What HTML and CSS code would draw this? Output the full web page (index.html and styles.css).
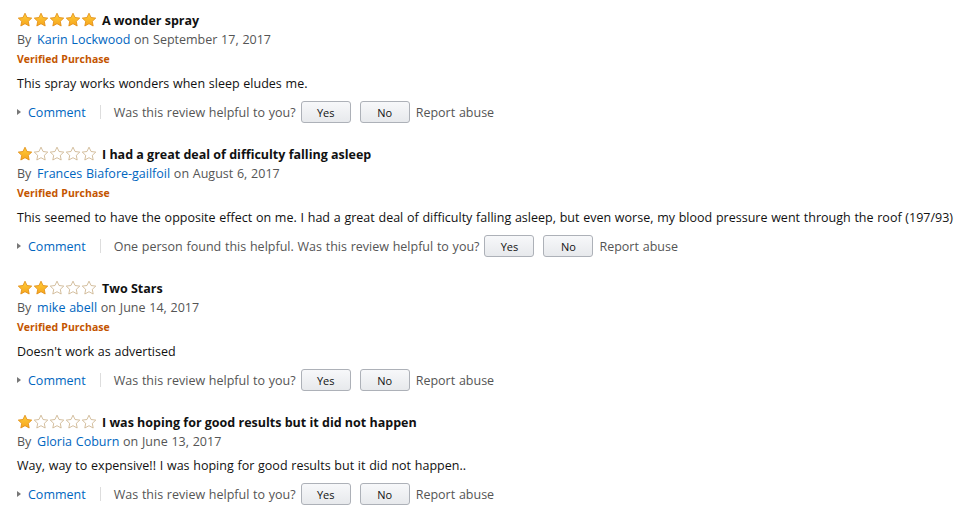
FILE: index.html
```html
<!DOCTYPE html>
<html>
<head>
<meta name="viewport" content="width=device-width, initial-scale=1">
<link rel="stylesheet" href="styles.css">
</head>
<body>

<svg width="0" height="0" class="defs">
  <defs>
    <linearGradient id="gold" x1="0" y1="0" x2="0" y2="1">
      <stop offset="0" stop-color="#ffce3b"/>
      <stop offset="1" stop-color="#f6a41b"/>
    </linearGradient>
    <symbol id="star" viewBox="0 0 16 16">
      <path d="M8 1.2l2.05 4.3 4.7.6-3.45 3.25.88 4.65L8 11.7l-4.18 2.3.88-4.65L1.25 6.1l4.7-.6z"/>
    </symbol>
  </defs>
</svg>

<div class="reviews">

  <div class="review">
    <div class="review-title">
      <span class="stars" data-rating="5"></span>
      <span class="title">A wonder spray</span>
    </div>
    <div class="byline">By <a href="#">Karin Lockwood</a> on September 17, 2017</div>
    <div class="verified">Verified Purchase</div>
    <div class="body">This spray works wonders when sleep eludes me.</div>
    <div class="actions">
      <a href="#" class="comment">Comment</a>
      <span class="sep"></span>
      <span class="helpful">Was this review helpful to you?</span>
      <button>Yes</button>
      <button>No</button>
      <span class="report">Report abuse</span>
    </div>
  </div>

  <div class="review">
    <div class="review-title">
      <span class="stars" data-rating="1"></span>
      <span class="title">I had a great deal of difficulty falling asleep</span>
    </div>
    <div class="byline">By <a href="#">Frances Biafore-gailfoil</a> on August 6, 2017</div>
    <div class="verified">Verified Purchase</div>
    <div class="body">This seemed to have the opposite effect on me. I had a great deal of difficulty falling asleep, but even worse, my blood pressure went through the roof (197/93)</div>
    <div class="actions">
      <a href="#" class="comment">Comment</a>
      <span class="sep"></span>
      <span class="helpful">One person found this helpful. Was this review helpful to you?</span>
      <button>Yes</button>
      <button>No</button>
      <span class="report">Report abuse</span>
    </div>
  </div>

  <div class="review">
    <div class="review-title">
      <span class="stars" data-rating="2"></span>
      <span class="title">Two Stars</span>
    </div>
    <div class="byline">By <a href="#">mike abell</a> on June 14, 2017</div>
    <div class="verified">Verified Purchase</div>
    <div class="body">Doesn't work as advertised</div>
    <div class="actions">
      <a href="#" class="comment">Comment</a>
      <span class="sep"></span>
      <span class="helpful">Was this review helpful to you?</span>
      <button>Yes</button>
      <button>No</button>
      <span class="report">Report abuse</span>
    </div>
  </div>

  <div class="review">
    <div class="review-title">
      <span class="stars" data-rating="1"></span>
      <span class="title">I was hoping for good results but it did not happen</span>
    </div>
    <div class="byline">By <a href="#">Gloria Coburn</a> on June 13, 2017</div>
    <div class="body">Way, way to expensive!! I was hoping for good results but it did not happen..</div>
    <div class="actions">
      <a href="#" class="comment">Comment</a>
      <span class="sep"></span>
      <span class="helpful">Was this review helpful to you?</span>
      <button>Yes</button>
      <button>No</button>
      <span class="report">Report abuse</span>
    </div>
  </div>

</div>

<script>
// fill each star row from its rating
var rows = document.querySelectorAll(".stars");
for (var i = 0; i < rows.length; i++) {
    var rating = parseInt(rows[i].getAttribute("data-rating"));
    var html = "";
    for (var s = 0; s < 5; s++) {
        var cls = s < rating ? "star full" : "star empty";
        html += '<svg class="' + cls + '" viewBox="0 0 16 16"><use href="#star"/></svg>';
    }
    rows[i].innerHTML = html;
}
</script>

</body>
</html>
```

FILE: styles.css
```css
body {
    margin: 0;
    padding: 10px 0 0 17px;
    font-family: "Open Sans", Arial, sans-serif;
    font-size: 12.5px;
    word-spacing: 0.5px;
    color: #111;
    background: #fff;
    white-space: nowrap;
}

.defs {
    position: absolute;
}

.review {
    margin-bottom: 20px;
}

.review-title {
    display: flex;
    align-items: center;
    height: 20px;
}

.stars {
    display: flex;
    margin-right: 5px;
}

.star {
    width: 16px;
    height: 16px;
}

.star.full {
    fill: url(#gold);
    stroke: #e08a10;
    stroke-width: 0.8;
}

.star.empty {
    fill: #fff;
    stroke: #c9ae86;
    stroke-width: 0.8;
}

.title {
    font-weight: bold;
    word-spacing: 0;
}

.byline {
    color: #555;
    line-height: 19px;
}

.byline a {
    color: #0066c0;
    text-decoration: none;
    margin-left: 2px;
}

.verified {
    color: #c45500;
    font-size: 10.5px;
    font-weight: bold;
    line-height: 20px;
}

.body {
    margin-top: 5px;
    line-height: 20px;
}

.actions {
    display: flex;
    align-items: center;
    margin-top: 6px;
    height: 24px;
    color: #555;
}

.comment {
    color: #0066c0;
    text-decoration: none;
    padding-left: 11px;
    position: relative;
}

.comment:before {
    content: "";
    position: absolute;
    left: 0;
    top: 5px;
    border-left: 4px solid #777;
    border-top: 3.5px solid transparent;
    border-bottom: 3.5px solid transparent;
}

.sep {
    width: 1px;
    height: 14px;
    background: #ddd;
    margin: 0 13px 0 14px;
}

button {
    font-family: "Open Sans", Arial, sans-serif;
    font-size: 11px;
    color: #111;
    width: 50px;
    height: 22px;
    margin-left: 5px;
    margin-right: 4px;
    border: 1px solid #adb1b8;
    border-radius: 3px;
    background: linear-gradient(#f7f8fa, #e7e9ec);
    padding: 0;
}

.report {
    margin-left: 2px;
}
```
